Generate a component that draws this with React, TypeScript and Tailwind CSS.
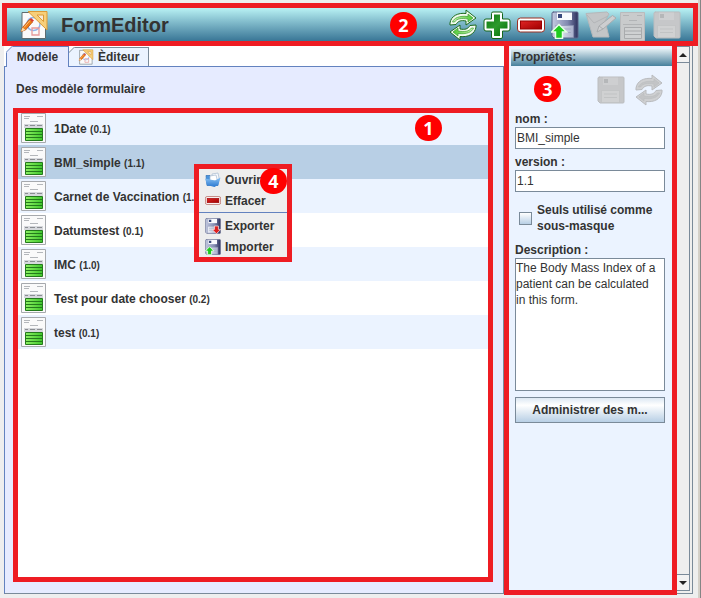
import { useState } from 'react';
import type { ReactNode } from 'react';

interface FormTemplate {
    name: string;
    version: string;
}

const templates: FormTemplate[] = [
    { name: '1Date', version: '0.1' },
    { name: 'BMI_simple', version: '1.1' },
    { name: 'Carnet de Vaccination', version: '1.1' },
    { name: 'Datumstest', version: '0.1' },
    { name: 'IMC', version: '1.0' },
    { name: 'Test pour date chooser', version: '0.2' },
    { name: 'test', version: '0.1' },
];

/* Gradients shared by all icons */
function IconDefs() {
    return (
        <svg className="absolute h-0 w-0" aria-hidden="true">
            <defs>
                <linearGradient id="green" x1="0" y1="0" x2="1" y2="0">
                    <stop offset="0" stopColor="#c9f5b4" />
                    <stop offset="1" stopColor="#4cc832" />
                </linearGradient>
                <linearGradient id="plus" x1="0" y1="0" x2="1" y2="1">
                    <stop offset="0" stopColor="#0d7a12" />
                    <stop offset="0.5" stopColor="#2c9a2c" />
                    <stop offset="1" stopColor="#067006" />
                </linearGradient>
                <linearGradient id="red" x1="0" y1="0" x2="1" y2="1">
                    <stop offset="0" stopColor="#e02424" />
                    <stop offset="1" stopColor="#a00000" />
                </linearGradient>
                <linearGradient id="disk" x1="0" y1="0" x2="1" y2="0">
                    <stop offset="0" stopColor="#c3cae0" />
                    <stop offset="0.6" stopColor="#8189b0" />
                    <stop offset="1" stopColor="#2c305c" />
                </linearGradient>
                <linearGradient id="label" x1="0" y1="0" x2="1" y2="0">
                    <stop offset="0" stopColor="#eef1f8" />
                    <stop offset="1" stopColor="#a9b0cc" />
                </linearGradient>
                <linearGradient id="stripe" x1="0" y1="0" x2="1" y2="0">
                    <stop offset="0" stopColor="#8cf063" />
                    <stop offset="1" stopColor="#3fc62c" />
                </linearGradient>
                <linearGradient id="folder" x1="0" y1="0" x2="0" y2="1">
                    <stop offset="0" stopColor="#8cc4f4" />
                    <stop offset="1" stopColor="#2a78d0" />
                </linearGradient>
            </defs>
        </svg>
    );
}

function FormEditorIcon({ className }: { className: string }) {
    return (
        <svg className={className} viewBox="0 0 28 30" fill="none">
            <path d="M2 2.500h23.500v26H2z" fill="#fafafa" stroke="#5d6c70" />
            <circle cx="13.500" cy="14" r="6.500" stroke="#8fb6ee" strokeWidth="1.500" />
            <path d="M12 18h7v7h-7z" stroke="#e79a9a" strokeWidth="1.300" />
            <path d="M8 1.500h19V20z" fill="#f7cf7a" stroke="#dc9a35" />
            <path d="M17 5h6.500v6.500z" fill="#f6eadb" stroke="#dc9a35" />
            <path d="M2.500 17.500 9.500 9.500l3 2.500-7 8L1 21.500z" fill="#ef7d16" stroke="#b84d0b" strokeWidth="0.800" />
            <path d="m9.500 9.500 1.500-1.500 3 2.500-1.500 1.500z" fill="#d93a2b" />
            <path d="m4 17.500 6-7" stroke="#ffc27a" />
            <path d="m1 21.500 1.500-4 3 2.500z" fill="#f6deb0" />
        </svg>
    );
}

function RefreshIcon({ disabled = false }: { disabled?: boolean }) {
    const outer = 'M1 14C2 7 9 3.500 17 4.500V1l10 8-10 7v-4C12 11 9 12 7 15.500L1 16z';
    const inner = 'M3.500 13C5 9 10 6.500 19 7.500V5l5 4-5 4v-3C12 9 8 9.500 5.500 13z';
    return (
        <svg className="h-8 w-7" viewBox="0 0 28 32" strokeLinejoin="round">
            {['rotate(0 14 16)', 'rotate(180 14 16)'].map((turn) => (
                <g key={turn} transform={turn}>
                    <path d={outer} fill={disabled ? '#cfd0d2' : '#f4fbf0'} stroke={disabled ? '#b9bbbe' : '#1c6b1e'} />
                    <path d={inner} fill={disabled ? '#c3c4c6' : 'url(#green)'} stroke={disabled ? '#bcbec0' : '#3c9c30'} strokeWidth="0.700" />
                </g>
            ))}
        </svg>
    );
}

function PlusIcon() {
    return (
        <svg className="h-8 w-7" viewBox="0 0 28 32">
            <path
                d="M10 3h8q1.500 0 1.500 1.500V10H25q2 0 2 2v8q0 2-2 2h-5.500v6q0 1.500-1.500 1.500h-8q-1.500 0-1.500-1.500v-6H3q-2 0-2-2v-8q0-2 2-2h5.500V4.500Q8.500 3 10 3z"
                fill="#fff"
                stroke="#14661a"
            />
            <path d="M11 5.500h6v7h7.500v7H17V27h-6v-7.500H3.500v-7H11z" fill="url(#plus)" />
        </svg>
    );
}

function MinusIcon({ className }: { className: string }) {
    return (
        <svg className={className} viewBox="0 0 28 16">
            <rect x="0.500" y="1" width="27" height="14" rx="3" fill="#fff" stroke="#9b3025" />
            <rect x="3.500" y="4" width="21" height="8" fill="url(#red)" stroke="#900" />
        </svg>
    );
}

function DiskIcon({ className, arrow, disabled = false }: { className: string; arrow?: 'up' | 'down'; disabled?: boolean }) {
    return (
        <svg className={className} viewBox="0 0 28 28">
            <path
                d="M2.500 1h23.500q1 0 1 1v24q0 1-1 1h-23l-2-2V2q0-1 2-1z"
                fill={disabled ? '#c6c7c9' : 'url(#disk)'}
                stroke={disabled ? '#bbbdbf' : '#5a6288'}
            />
            <path d="M6 1.500h15V9H6z" fill={disabled ? '#cecfd1' : '#f8f9fd'} />
            <path d="M7 3h4v4H7z" fill={disabled ? '#b5b7b9' : '#39497d'} />
            <path
                d="M4.500 14.500h18v12h-18z"
                fill={disabled ? '#d0d1d2' : 'url(#label)'}
                stroke={disabled ? '#c0c2c3' : '#8890b0'}
                strokeWidth="0.700"
            />
            <path d="M7 18h13M7 21.500h13" stroke={disabled ? '#c1c3c4' : '#a3aac2'} />
            {arrow === 'up' && (
                <path d="m8 13.500 7.500 7.500h-4v6.500h-7V21h-4z" fill="#1fca1f" stroke="#e8ffe8" strokeWidth="1.500" />
            )}
            {arrow === 'down' && (
                <path d="M20 27.500 12.500 20h4v-6h7v6h4z" fill="#dd2020" stroke="#ffecec" strokeWidth="1.200" />
            )}
        </svg>
    );
}

function EditIcon() {
    return (
        <svg className="h-8 w-8" viewBox="0 0 32 32" strokeLinejoin="round">
            <path d="M1 4.500 22 3l2 2-4 7 4 16H8z" fill="#c3c5c7" stroke="#b6b8ba" />
            <path d="m2 6 7 8 14-7" fill="none" stroke="#b3b5b8" />
            <path d="M27.500 6.500 31 9 18 20l-6 3 2-6z" fill="#cdced0" stroke="#a9acae" />
            <path d="m14 17 4 3" stroke="#a9acae" />
        </svg>
    );
}

function PageIcon() {
    return (
        <svg className="h-8 w-7" viewBox="0 0 28 32" fill="none">
            <path d="M1.500 3.500h24v28h-24z" fill="#c9cbcc" stroke="#b9bbbd" />
            <path d="M4 6.500h6M18 6.500h5M10 11.500h8M4 15.500h19" stroke="#b2b4b6" />
            <path d="M5.500 18.500h17v11h-17zM5.500 22h17M5.500 25.500h17" fill="#cfd1d2" stroke="#a9abad" />
        </svg>
    );
}

function TemplateIcon() {
    return (
        <svg className="h-[30px] w-[25px] shrink-0" viewBox="0 0 25 30" fill="none">
            <path d="M0.500 0.500h24v29H0.500z" fill="#fafafa" stroke="#a6a9ad" />
            <path d="M3 3.500h6M3 5.500h5M16 3.500h6M9 8.500h8" stroke="#b4b7bb" />
            <path d="M3 11h19v4H3z" fill="#d6d8dc" />
            <path d="M4 12.500h3M9 12.500h5M16 12.500h5" stroke="#8b8e92" />
            <path d="M4.500 15.500h17v12h-17z" fill="url(#stripe)" stroke="#247a1c" />
            <path d="M5 18.500h16M5 21.500h16M5 24.500h16" stroke="#247a1c" />
        </svg>
    );
}

function FolderIcon() {
    return (
        <svg className="h-4 w-4" viewBox="0 0 16 16">
            <path d="M1 3.500h4l1 2h7v8H2z" fill="#4a94de" stroke="#3170b4" strokeWidth="0.700" />
            <path d="m7 2 6-1 1.500 7-7 1z" fill="#f6f9fd" stroke="#a5b8cd" strokeWidth="0.700" />
            <path d="m5 4 6-1 1.500 6H5z" fill="#fff" stroke="#a5b8cd" strokeWidth="0.700" />
            <path d="M0 6.500 10 8.500l5.500-3-2 7-4 2.500-7.500-2z" fill="url(#folder)" />
        </svg>
    );
}

function Badge({ className, children }: { className: string; children: ReactNode }) {
    return (
        <span
            className={`pointer-events-none absolute flex h-[26px] w-[27px] items-center justify-center rounded-full bg-[#ff0000] font-['Open_Sans',sans-serif] text-lg font-bold text-white ${className}`}
        >
            {children}
        </span>
    );
}

function TabCorner({ color }: { color: string }) {
    return (
        <svg className="absolute -top-px -left-px h-[7px] w-[7px]" viewBox="0 0 7 7">
            <path d="M0 0h7L0 7z" fill="#fff" />
            <path d="M0 6.500 6.500 0" stroke={color} />
        </svg>
    );
}

function Toolbar() {
    return (
        <header className="relative flex h-[43px] items-center border-[5px] border-[#ee1c23] bg-linear-to-b from-[#b9f2f4] to-[#397696] pr-3 pl-[13px]">
            <FormEditorIcon className="h-[30px] w-7" />
            <h1 className="ml-[13px] text-xl font-bold">FormEditor</h1>
            <div className="ml-auto flex items-center gap-[6px]">
                <button aria-label="Actualiser"><RefreshIcon /></button>
                <button aria-label="Ajouter"><PlusIcon /></button>
                <button aria-label="Supprimer"><MinusIcon className="h-4 w-7" /></button>
                <button aria-label="Importer"><DiskIcon className="h-7 w-7" arrow="up" /></button>
                <button className="w-7" aria-label="Modifier" disabled><EditIcon /></button>
                <button aria-label="Formulaire" disabled><PageIcon /></button>
                <button aria-label="Enregistrer" disabled><DiskIcon className="h-7 w-7" disabled /></button>
            </div>
            <Badge className="top-1 right-[276px]">2</Badge>
        </header>
    );
}

function ContextMenu() {
    return (
        <div className="absolute top-[53px] left-[178px] w-[98px] border-[5px] border-[#ee1c23] bg-[#eeeeee] font-bold">
            <button className="flex h-[21px] w-full items-center gap-1 pl-[6px]">
                <FolderIcon />
                Ouvrir
            </button>
            <button className="flex h-[21px] w-full items-center gap-1 pl-[6px]">
                <MinusIcon className="h-[9px] w-4" />
                Effacer
            </button>
            <hr className="mt-px mb-[2px] border-[#6382bf]" />
            <button className="flex h-[21px] w-full items-center gap-1 pl-[6px]">
                <DiskIcon className="h-4 w-4" arrow="down" />
                Exporter
            </button>
            <button className="flex h-[21px] w-full items-center gap-1 pl-[6px]">
                <DiskIcon className="h-4 w-4" arrow="up" />
                Importer
            </button>
            <Badge className="-top-px right-0">4</Badge>
        </div>
    );
}

function TemplateList() {
    const [selected, setSelected] = useState('BMI_simple');

    return (
        <div className="relative mt-[14px] mr-[13px] mb-[14px] ml-[11px] flex-1 bg-white">
            <ul>
                {templates.map((t) => (
                    <li key={t.name} className="odd:bg-[#ebf3ff]">
                        <button
                            onClick={() => setSelected(t.name)}
                            className={`flex h-[34px] w-full items-center gap-2 pl-[5px] text-left font-bold ${t.name === selected ? 'bg-[#b8cfe5]' : ''}`}
                        >
                            <TemplateIcon />
                            <span className="pt-px">
                                {t.name} <span className="text-[10px]">({t.version})</span>
                            </span>
                        </button>
                    </li>
                ))}
            </ul>
            <div className="pointer-events-none absolute -inset-[3px] border-[5px] border-[#ee1c23]" />
            <Badge className="top-1 right-12">1</Badge>
            <ContextMenu />
        </div>
    );
}

function TemplatePanel() {
    return (
        <section className="mb-1 flex flex-1 flex-col">
            <div role="tablist" className="flex items-end bg-white pl-[2px] font-bold">
                <button
                    role="tab"
                    aria-selected="true"
                    className="relative z-10 -mb-px h-[21px] w-[63px] border-x border-t border-[#6382bf] bg-[#e6ebff]"
                >
                    <TabCorner color="#6382bf" />
                    Modèle
                </button>
                <button
                    role="tab"
                    aria-selected="false"
                    className="relative flex h-[19px] w-20 items-center gap-1 border-t border-r border-[#7a8a99] bg-[#ebf3ff] pl-[9px]"
                >
                    <TabCorner color="#7a8a99" />
                    <FormEditorIcon className="h-4 w-4" />
                    Èditeur
                </button>
            </div>
            <div className="flex flex-1 flex-col border border-t-[#6382bf] border-r-[#7a8a99] border-b-[#7a8a99] border-l-[#6382bf] bg-[#e6ebff]">
                <h2 className="mt-[14px] ml-[11px] leading-4 font-bold">Des modèle formulaire</h2>
                <TemplateList />
            </div>
        </section>
    );
}

const fieldClass = 'w-full border border-[#7a8a99] bg-white outline-none';

function PropertiesPanel() {
    return (
        <aside className="relative mb-[3px] w-[173px] shrink-0 border-x-[5px] border-b-[5px] border-[#ee1c23] bg-[#ebf3ff]">
            <h2 className="mt-[3px] ml-[2px] h-[17px] bg-linear-to-b from-[#e4f0f4] to-[#46809c] pl-[2px] font-bold">
                Propriétés:
            </h2>
            <Badge className="top-[30px] left-[25px]">3</Badge>
            <form className="flex flex-col pr-[7px] pl-[6px]">
                <div className="flex h-[46px] items-center justify-end gap-[10px] pt-[2px] pr-[2px]">
                    <button type="button" aria-label="Enregistrer" disabled><DiskIcon className="h-7 w-7" disabled /></button>
                    <button type="button" aria-label="Actualiser" disabled><RefreshIcon disabled /></button>
                </div>
                <label htmlFor="nom" className="leading-[15px] font-bold">nom :</label>
                <input id="nom" className={`h-[22px] px-px ${fieldClass}`} defaultValue="BMI_simple" />
                <label htmlFor="version" className="mt-[6px] leading-[15px] font-bold">version :</label>
                <input id="version" className={`h-[22px] px-px ${fieldClass}`} defaultValue="1.1" />
                <label className="mt-[10px] flex items-center gap-[5px] pl-1 leading-4 font-bold">
                    <input
                        type="checkbox"
                        className="h-[13px] w-[13px] shrink-0 appearance-none border border-[#7a8a99] bg-linear-to-b from-white to-[#b8cfe5]"
                    />
                    Seuls utilisé comme sous-masque
                </label>
                <label htmlFor="description" className="mt-[9px] leading-[15px] font-bold">Description :</label>
                <textarea
                    id="description"
                    className={`h-[133px] resize-none pt-px pr-2 leading-4 ${fieldClass}`}
                    defaultValue="The Body Mass Index of a patient can be calculated in this form."
                />
                <button
                    type="button"
                    className="mt-[6px] h-[26px] w-full border border-[#7a8a99] bg-linear-to-b from-[#dde8f3] via-white via-30% to-[#b8cfe5] font-bold"
                >
                    Administrer des m...
                </button>
            </form>
        </aside>
    );
}

function ScrollBar() {
    return (
        <div className="mb-1 flex w-4 shrink-0 border-r border-b border-[#7a8a99] pr-[2px] pb-[2px]">
            <div className="flex flex-1 flex-col justify-between border-r border-b border-[#7a8a99]">
                <button aria-label="Défiler vers le haut" className="flex h-[17px] items-center justify-center border-y border-[#7a8a99] bg-[#f2f2f2]">
                    <svg className="h-1 w-2" viewBox="0 0 8 4"><path d="M4 0l4 4H0z" fill="#222" /></svg>
                </button>
                <button aria-label="Défiler vers le bas" className="flex h-4 items-center justify-center border-t border-[#7a8a99] bg-[#f2f2f2]">
                    <svg className="h-1 w-2" viewBox="0 0 8 4"><path d="M0 0h8L4 4z" fill="#222" /></svg>
                </button>
            </div>
        </div>
    );
}

export default function App() {
    return (
        <div className="flex min-h-screen flex-col border-r border-[#858585] bg-[#eeeeee] font-['Liberation_Sans',Arial,sans-serif] text-xs text-[#333333]">
            <IconDefs />
            <div className="flex flex-1 flex-col border-r-2 border-[#d4d0c8] pt-[3px] pl-[2px]">
                <Toolbar />
                <main className="flex flex-1 pr-[5px] pl-[2px]">
                    <TemplatePanel />
                    <PropertiesPanel />
                    <ScrollBar />
                </main>
            </div>
        </div>
    );
}
